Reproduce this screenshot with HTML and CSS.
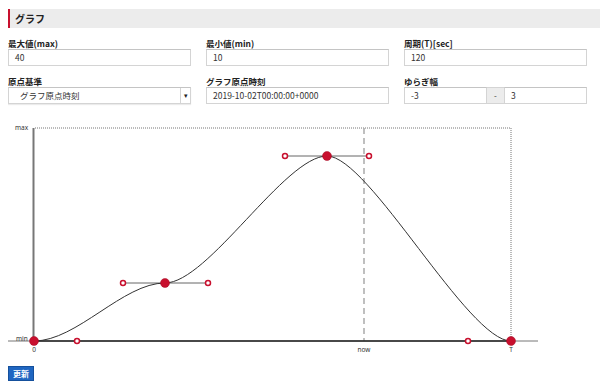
FILE: index.html
```html
<!DOCTYPE html>
<html lang="ja">
<head>
    <meta charset="UTF-8">
    <title>グラフ</title>
    <link rel="stylesheet" href="styles.css">
</head>
<body>

    <!-- Section title -->
    <h2 class="section-title">グラフ</h2>

    <!-- Settings form -->
    <div class="settings">
        <div class="field">
            <label>最大値(max)</label>
            <div class="input">40</div>
        </div>
        <div class="field">
            <label>最小値(min)</label>
            <div class="input">10</div>
        </div>
        <div class="field">
            <label>周期(T)[sec]</label>
            <div class="input">120</div>
        </div>
        <div class="field">
            <label>原点基準</label>
            <div class="select">
                <span class="select-text">グラフ原点時刻</span>
                <span class="select-arrow">▾</span>
            </div>
        </div>
        <div class="field">
            <label>グラフ原点時刻</label>
            <div class="input">2019-10-02T00:00:00+0000</div>
        </div>
        <div class="field">
            <label>ゆらぎ幅</label>
            <div class="input-group">
                <div class="input">-3</div>
                <span class="addon">-</span>
                <div class="input">3</div>
            </div>
        </div>
    </div>

    <!-- Curve editor -->
    <svg class="chart" width="584" height="245" viewBox="8 112 584 245">
        <text class="axis-label" x="15" y="129">max</text>
        <line x1="35" y1="127" x2="511" y2="127" class="dotted"/>
        <line x1="511" y1="127" x2="511" y2="340" class="dotted"/>
        <line x1="364" y1="127" x2="364" y2="340" class="now-line"/>
        <line x1="33.5" y1="127" x2="33.5" y2="340" class="y-axis"/>
        <line x1="8" y1="340" x2="538" y2="340" class="x-axis-out"/>
        <line x1="34" y1="340" x2="511" y2="340" class="x-axis"/>
        <text class="axis-label" x="16" y="340">min</text>
        <text class="axis-label mid" x="34" y="351">0</text>
        <text class="axis-label mid" x="364" y="351">now</text>
        <text class="axis-label mid" x="511" y="351">T</text>

        <line x1="123" y1="282" x2="208" y2="282" class="handle-line"/>
        <line x1="285" y1="155" x2="369" y2="155" class="handle-line"/>

        <path class="curve" d="M34 340 C77 340 123 282 165 282 C208 282 285 155 327 155 C369 155 468 340 511 340"/>

        <circle class="handle" cx="77" cy="340" r="2.5"/>
        <circle class="handle" cx="123" cy="282" r="2.5"/>
        <circle class="handle" cx="208" cy="282" r="2.5"/>
        <circle class="handle" cx="285" cy="155" r="2.5"/>
        <circle class="handle" cx="369" cy="155" r="2.5"/>
        <circle class="handle" cx="468" cy="340" r="2.5"/>

        <circle class="knot" cx="34" cy="340" r="4.5"/>
        <circle class="knot" cx="165" cy="282" r="4.5"/>
        <circle class="knot" cx="327" cy="155" r="4.5"/>
        <circle class="knot" cx="511" cy="340" r="4.5"/>
    </svg>

    <button class="btn-update">更新</button>

</body>
</html>
```

FILE: styles.css
```css
* {
    margin: 0;
    padding: 0;
    box-sizing: border-box;
}

body {
    margin: 9px 0 0 8px;
    width: 592px;
    font-family: "Noto Sans CJK JP", "Noto Sans", sans-serif;
    color: #333;
    background: #fff;
}

/* Section title */
.section-title {
    height: 19px;
    line-height: 19px;
    background-color: #ececec;
    border-left: 2px solid #c8102e;
    padding-left: 5px;
    font-size: 10px;
    font-weight: bold;
    color: #222;
}

/* Settings form */
.settings {
    display: grid;
    grid-template-columns: 183px 183px 183px;
    column-gap: 15px;
    row-gap: 9px;
    margin-top: 9px;
}

.field label {
    display: block;
    height: 12px;
    line-height: 12px;
    font-size: 8.5px;
    font-weight: bold;
    color: #222;
}

.input,
.select {
    height: 17px;
    line-height: 15px;
    border: 1px solid #d4d4d4;
    border-top-color: #c4c4c4;
    padding-left: 6px;
    font-size: 8.5px;
    color: #333;
    background: #fff;
}

.select {
    display: flex;
    justify-content: space-between;
    padding-left: 11px;
    padding-right: 0;
    box-shadow: 0 1px 1px rgba(0, 0, 0, 0.08);
}

.select-arrow {
    width: 10px;
    border-left: 1px solid #d4d4d4;
    text-align: center;
    font-size: 7px;
    color: #222;
}

.input-group {
    display: flex;
}

.input-group .input {
    flex: 1;
}

.addon {
    width: 17px;
    height: 17px;
    line-height: 15px;
    text-align: center;
    background: #ececec;
    border-top: 1px solid #d4d4d4;
    border-bottom: 1px solid #d4d4d4;
    font-size: 8px;
}

/* Chart */
.chart {
    display: block;
    margin-top: 9px;
}

.axis-label {
    font-size: 6.5px;
    fill: #333;
    font-family: "Noto Sans", sans-serif;
}

.axis-label.mid {
    text-anchor: middle;
}

.dotted {
    stroke: #777;
    stroke-width: 1;
    stroke-dasharray: 1 1;
}

.now-line {
    stroke: #aaa;
    stroke-width: 1.5;
    stroke-dasharray: 6 4;
}

.y-axis {
    stroke: #777;
    stroke-width: 2;
}

.x-axis-out {
    stroke: #777;
    stroke-width: 1;
}

.x-axis {
    stroke: #222;
    stroke-width: 1.5;
}

.handle-line {
    stroke: #666;
    stroke-width: 1;
}

.curve {
    fill: none;
    stroke: #333;
    stroke-width: 1;
}

.handle {
    fill: #fff;
    stroke: #c8102e;
    stroke-width: 1.5;
}

.knot {
    fill: #c8102e;
    stroke: #a50d26;
    stroke-width: 0.5;
}

/* Update button */
.btn-update {
    display: block;
    margin-top: 8px;
    width: 26px;
    height: 15px;
    background-color: #1f66c1;
    border: 1px solid #15509c;
    color: #fff;
    font-family: "Noto Sans CJK JP", sans-serif;
    font-size: 8px;
    font-weight: bold;
    cursor: pointer;
}
```
